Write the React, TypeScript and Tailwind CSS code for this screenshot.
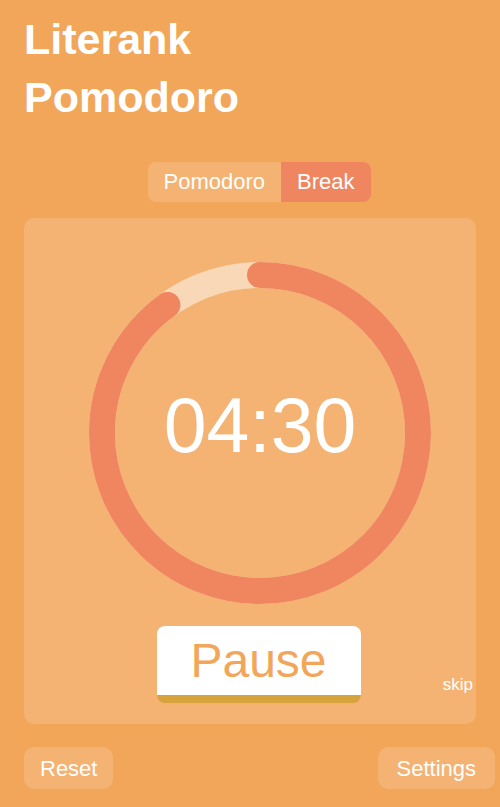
const RADIUS = 158
const CIRC = 2 * Math.PI * RADIUS

function TimerRing({ progress }: { progress: number }) {
  return (
    <svg width="342" height="342" viewBox="0 0 342 342" className="block">
      <circle cx="171" cy="171" r={RADIUS} fill="none" stroke="#F9D8B8" strokeWidth="26" />
      <circle
        cx="171"
        cy="171"
        r={RADIUS}
        fill="none"
        stroke="#F0865F"
        strokeWidth="26"
        strokeLinecap="round"
        strokeDasharray={`${CIRC * progress} ${CIRC}`}
        transform="rotate(-90 171 171)"
      />
    </svg>
  )
}

export default function App() {
  return (
    <div className="h-[807px] w-[500px] overflow-hidden bg-[#F2A65A] font-['Liberation_Sans',Arial,sans-serif] text-white">
      <h1 className="pl-6 pt-[10px] text-[43px] font-bold leading-[58px]">
        Literank
        <br />
        Pomodoro
      </h1>

      <div className="mt-[36px] flex justify-center pl-[18px]">
        <div className="flex h-10 overflow-hidden rounded-[8px] bg-[#F4B273] text-[22px]">
          <button className="px-4 leading-10">Pomodoro</button>
          <button className="bg-[#F0865F] px-4 leading-10">Break</button>
        </div>
      </div>

      <div className="mx-6 mt-4 h-[506px] rounded-[10px] bg-[#F4B273] pt-[44px]">
        <div className="flex justify-center pl-5">
          <div className="relative">
            <TimerRing progress={0.9} />
            <div className="absolute inset-0 flex items-center justify-center pb-[16px] text-[77px] leading-none">
              04:30
            </div>
          </div>
        </div>

        <div className="mt-[22px] grid grid-cols-[1fr_204px_1fr] pl-5 pr-[3px]">
          <div />
          <button className="h-[77px] rounded-[8px] border-b-[8px] border-[#D6A33C] bg-white text-[48px] leading-none text-[#F2A65A]">
            Pause
          </button>
          <div className="flex items-end justify-end">
            <button className="mb-[6px] text-[17px] leading-6">skip</button>
          </div>
        </div>
      </div>

      <div className="mt-[23px] flex justify-between pl-6 pr-[5px]">
        <button className="h-[42px] rounded-[10px] bg-[#F4B273] px-4 text-[22px]">Reset</button>
        <button className="h-[42px] rounded-[10px] bg-[#F4B273] px-[19px] text-[22px]">Settings</button>
      </div>
    </div>
  )
}
